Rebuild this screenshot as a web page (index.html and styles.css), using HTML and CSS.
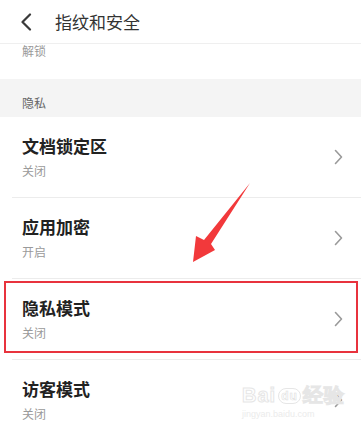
FILE: index.html
```html
<!DOCTYPE html>
<html lang="zh">
<head>
<meta charset="utf-8">
<link rel="stylesheet" href="styles.css">
</head>
<body>
<div class="page">
  <header class="header">
    <svg class="back" width="12" height="18" viewBox="0 0 12 18"><path d="M10 1.5 L2.5 9 L10 16.5" fill="none" stroke="#3a3a3a" stroke-width="2.2" stroke-linecap="round" stroke-linejoin="round"/></svg>
    <h1 class="title">指纹和安全</h1>
  </header>
  <div class="partial"><span class="partial-text">解锁</span></div>
  <div class="section">隐私</div>
  <ul class="list">
    <li class="row">
      <div class="texts"><div class="row-title">文档锁定区</div><div class="row-sub">关闭</div></div>
      <svg class="chev" width="9" height="16" viewBox="0 0 9 16"><path d="M1.5 1.5 L7.5 8 L1.5 14.5" fill="none" stroke="#9a9a9a" stroke-width="1.6" stroke-linecap="round" stroke-linejoin="round"/></svg>
    </li>
    <li class="row">
      <div class="texts"><div class="row-title">应用加密</div><div class="row-sub">开启</div></div>
      <svg class="chev" width="9" height="16" viewBox="0 0 9 16"><path d="M1.5 1.5 L7.5 8 L1.5 14.5" fill="none" stroke="#9a9a9a" stroke-width="1.6" stroke-linecap="round" stroke-linejoin="round"/></svg>
    </li>
    <li class="row highlighted">
      <div class="texts"><div class="row-title">隐私模式</div><div class="row-sub">关闭</div></div>
      <svg class="chev" width="9" height="16" viewBox="0 0 9 16"><path d="M1.5 1.5 L7.5 8 L1.5 14.5" fill="none" stroke="#9a9a9a" stroke-width="1.6" stroke-linecap="round" stroke-linejoin="round"/></svg>
    </li>
    <li class="row">
      <div class="texts"><div class="row-title">访客模式</div><div class="row-sub">关闭</div></div>
      <svg class="chev" width="9" height="16" viewBox="0 0 9 16"><path d="M1.5 1.5 L7.5 8 L1.5 14.5" fill="none" stroke="#9a9a9a" stroke-width="1.6" stroke-linecap="round" stroke-linejoin="round"/></svg>
    </li>
  </ul>
  <svg class="arrow" width="361" height="432" viewBox="0 0 361 432"><polygon points="250,183 211,244 215,250 193,262 196,236 204,240" fill="#f2393b"/></svg>
  <div class="watermark">
    <div class="wm-main">Bai<span class="wm-du">du</span>经验</div>
    <div class="wm-url">jingyan.baidu.com</div>
  </div>
</div>
</body>
</html>
```

FILE: styles.css
```css
* { box-sizing: border-box; }
html, body { margin: 0; padding: 0; background: #fff; }
body {
  font-family: "Noto Sans CJK SC", "Noto Sans", sans-serif;
  width: 361px;
  height: 432px;
  overflow: hidden;
}
.page { position: relative; width: 361px; height: 432px; overflow: hidden; }
.header {
  height: 44px;
  display: flex;
  align-items: center;
  padding-left: 20px;
  border-bottom: 1px solid #efefef;
}
.back { display: block; margin-right: 23px; }
.title {
  margin: 0;
  font-size: 17px;
  font-weight: 400;
  color: #333;
  line-height: 22px;
}
.partial {
  height: 35px;
  padding-left: 22px;
}
.partial-text {
  display: block;
  font-size: 12px;
  line-height: 14px;
  color: #9a9a9a;
}
.section {
  height: 38px;
  background: #f4f4f4;
  padding: 16px 0 0 22px;
  font-size: 12px;
  line-height: 16px;
  color: #666;
}
.list { list-style: none; margin: 0; padding: 0; }
.row {
  position: relative;
  height: 81px;
  display: flex;
  align-items: center;
  justify-content: space-between;
  margin-left: 12px;
  padding: 0 18px 0 10px;
  border-bottom: 1px solid #ececec;
}
.texts { display: flex; flex-direction: column; gap: 6px; padding-bottom: 1px; }
.row-title {
  font-size: 17px;
  font-weight: 700;
  color: #222;
  line-height: 22px;
}
.row-sub {
  font-size: 12px;
  color: #9a9a9a;
  line-height: 16px;
}
.chev { display: block; }
.highlighted::before {
  content: "";
  position: absolute;
  left: -8px;
  right: 3px;
  top: 2px;
  bottom: 6px;
  border: 2px solid #e8333d;
  pointer-events: none;
}
.arrow { position: absolute; left: 0; top: 0; pointer-events: none; }
.watermark {
  position: absolute;
  left: 242px;
  top: 384px;
  color: #fff;
  font-family: "Liberation Sans", sans-serif;
  pointer-events: none;
}
.wm-main {
  font-size: 20px;
  font-weight: 700;
  line-height: 22px;
  -webkit-text-stroke: 1px #e6e6e6;
  letter-spacing: 1px;
}
.wm-du {
  display: inline-block;
  font-size: 12px;
  line-height: 14px;
  border: 1px solid #e6e6e6;
  border-radius: 8px;
  padding: 0 2px;
  margin: 0 2px;
  vertical-align: 2px;
  -webkit-text-stroke: 0.6px #e0e0e0;
}
.wm-url {
  font-size: 9px;
  line-height: 12px;
  color: #ebebeb;
  margin-top: 2px;
}
```
